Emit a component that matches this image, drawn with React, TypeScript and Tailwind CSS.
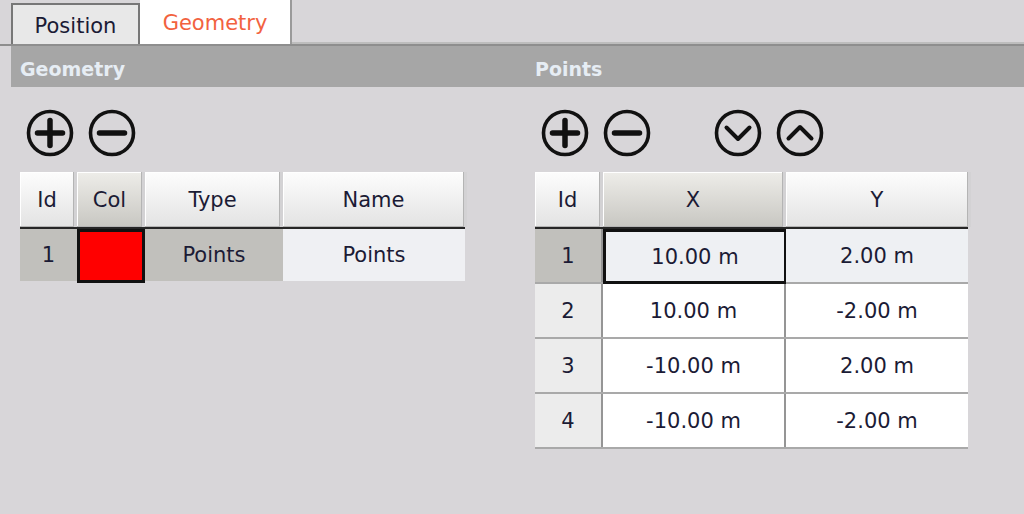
import React from "react";

const Circle = () => <circle cx="24" cy="24" r="21.5" fill="none" stroke="#111" strokeWidth="3.6" />;

const PlusIcon = () => (
  <svg width="48" height="48" viewBox="0 0 48 48">
    <Circle />
    <line x1="11.5" y1="24" x2="36.5" y2="24" stroke="#111" strokeWidth="5.5" strokeLinecap="round" />
    <line x1="24" y1="11.5" x2="24" y2="36.5" stroke="#111" strokeWidth="5.5" strokeLinecap="round" />
  </svg>
);
const MinusIcon = () => (
  <svg width="48" height="48" viewBox="0 0 48 48">
    <Circle />
    <line x1="11.5" y1="24" x2="36.5" y2="24" stroke="#111" strokeWidth="5.5" strokeLinecap="round" />
  </svg>
);
const DownIcon = () => (
  <svg width="48" height="48" viewBox="0 0 48 48">
    <Circle />
    <polyline points="12.5,18.5 24,30 35.5,18.5" fill="none" stroke="#111" strokeWidth="4" strokeLinecap="round" strokeLinejoin="round" />
  </svg>
);
const UpIcon = () => (
  <svg width="48" height="48" viewBox="0 0 48 48">
    <Circle />
    <polyline points="12.5,29.5 24,18 35.5,29.5" fill="none" stroke="#111" strokeWidth="4" strokeLinecap="round" strokeLinejoin="round" />
  </svg>
);

function HeadCell({ w, label, sel }: { w: string; label: string; sel?: boolean }) {
  return (
    <div
      className={`${w} h-full flex items-center justify-center pt-[2px] border-r-[3px] border-[#d3d2d4] shadow-[inset_-1px_-1px_0_#b4b4b4,inset_1px_1px_0_#ffffff] ${
        sel ? "bg-gradient-to-b from-[#eeede9] to-[#c8c7c2]" : "bg-gradient-to-b from-[#fdfdfd] to-[#e3e3e3]"
      }`}
    >
      {label}
    </div>
  );
}

const rows = [
  { id: "1", x: "10.00 m", y: "2.00 m" },
  { id: "2", x: "10.00 m", y: "-2.00 m" },
  { id: "3", x: "-10.00 m", y: "2.00 m" },
  { id: "4", x: "-10.00 m", y: "-2.00 m" },
];

export default function App() {
  return (
    <div className="w-[1024px] h-[514px] overflow-hidden bg-[#d8d6d9] font-['DejaVu_Sans',Verdana,sans-serif] text-[#1b1b35]">
      {/* Tabs */}
      <div className="flex items-end h-[46px] pl-[11px] border-b-[2px] border-[#8e8e8e]">
        <div className="w-[129px] h-[41px] pt-[4px] bg-[#e8e8e8] border-2 border-b-0 border-[#777777] flex items-center justify-center text-[21px] leading-none">
          Position
        </div>
        <div className="w-[152px] h-[46px] pt-[4px] bg-white border-r-[2px] border-[#9a9a9a] flex items-center justify-center text-[21px] leading-none text-[#f2623f]">
          Geometry
        </div>
        <div className="flex-1 h-[2px] bg-[#bdbdbd]" />
      </div>

      {/* Header bar */}
      <div className="ml-[11px] h-[41px] pt-[6px] bg-[#a6a6a6] flex items-center text-[19px] font-bold text-[#e6edf4]">
        <div className="w-[524px] pl-[9px]">Geometry</div>
        <div>Points</div>
      </div>

      <div className="flex pt-[22px]">
        {/* Left panel */}
        <div className="w-[535px] pl-[20px]">
          <div className="flex gap-[14px] pl-[6px] h-[48px]">
            <PlusIcon />
            <MinusIcon />
          </div>
          <div className="mt-[15px] w-[448px] text-[21px]">
            <div className="flex h-[55px]">
              <HeadCell w="w-[57px]" label="Id" />
              <HeadCell w="w-[68px]" label="Col" sel />
              <HeadCell w="w-[138px]" label="Type" />
              <HeadCell w="w-[184px]" label="Name" />
            </div>
            <div className="h-[2px] bg-[#262626] w-[445px]" />
            <div className="flex h-[52px] w-[445px]">
              <div className="w-[57px] pt-[2px] bg-[#c1c0bc] flex items-center justify-center">1</div>
              <div className="w-[68px] h-[54px] bg-[#ff0000] border-[3px] border-[#111]" />
              <div className="w-[138px] pt-[2px] bg-[#c1c0bc] flex items-center justify-center">Points</div>
              <div className="w-[182px] pt-[2px] bg-[#eff0f3] flex items-center justify-center">Points</div>
            </div>
          </div>
        </div>

        {/* Right panel */}
        <div className="flex-1">
          <div className="flex pl-[6px] h-[48px]">
            <PlusIcon />
            <div className="ml-[14px]"><MinusIcon /></div>
            <div className="ml-[63px]"><DownIcon /></div>
            <div className="ml-[14px]"><UpIcon /></div>
          </div>
          <div className="mt-[15px] w-[436px] text-[21px]">
            <div className="flex h-[55px]">
              <HeadCell w="w-[68px]" label="Id" />
              <HeadCell w="w-[183px]" label="X" sel />
              <HeadCell w="w-[185px]" label="Y" />
            </div>
            <div className="h-[2px] bg-[#262626] w-[433px]" />
            {rows.map((r, i) => (
              <div key={r.id} className="flex h-[55px] w-[433px] border-b-2 border-[#a9a9a9]">
                <div
                  className={`w-[68px] pt-[2px] border-r-2 border-[#959595] flex items-center justify-center ${
                    i === 0 ? "bg-[#c1c0bc]" : "bg-[#ececec]"
                  }`}
                >
                  {r.id}
                </div>
                <div
                  className={`w-[183px] pt-[2px] border-r-2 flex items-center justify-center ${
                    i === 0 ? "bg-[#eef0f3] border-[3px] border-[#111] -mb-[2px]" : "bg-white border-[#959595]"
                  }`}
                >
                  {r.x}
                </div>
                <div className={`w-[182px] pt-[2px] flex items-center justify-center ${i === 0 ? "bg-[#eef0f3]" : "bg-white"}`}>
                  {r.y}
                </div>
              </div>
            ))}
          </div>
        </div>
      </div>
    </div>
  );
}
